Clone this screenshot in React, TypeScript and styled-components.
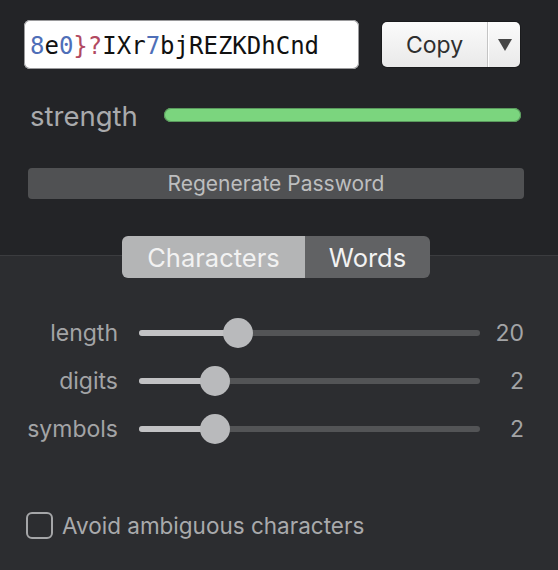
import React from "react";
import styled, { createGlobalStyle } from "styled-components";

const Global = createGlobalStyle`
  html, body { margin: 0; padding: 0; background: #2c2d30; }
  body { font-family: Inter, "Noto Sans", sans-serif; -webkit-font-smoothing: antialiased; }
`;

const Page = styled.div`
  width: 558px;
  height: 570px;
  display: flex;
  flex-direction: column;
  overflow: hidden;
`;

const Top = styled.div`
  background: #232427;
  height: 255px;
  border-bottom: 1px solid #3b3c3f;
  box-sizing: content-box;
  display: flex;
  flex-direction: column;
`;

const PasswordRow = styled.div`
  display: flex;
  align-items: center;
  padding: 20px 38px 0 24px;
  gap: 23px;
`;

const PasswordField = styled.div`
  width: 335px;
  height: 49px;
  box-sizing: border-box;
  background: #ffffff;
  border-radius: 6px;
  box-shadow: 0 0 0 1px #9a9a9c inset;
  display: flex;
  align-items: center;
  padding: 2px 0 0 6px;
  font-family: "DejaVu Sans Mono", "Liberation Mono", monospace;
  font-size: 24px;
  color: #111;
`;

const Ch = styled.span<{ $kind: "digit" | "symbol" | "plain" }>`
  color: ${(p) => (p.$kind === "digit" ? "#4f6fb8" : p.$kind === "symbol" ? "#b24a61" : "#111")};
`;

const CopyGroup = styled.div`
  width: 138px;
  height: 45px;
  display: flex;
  border-radius: 5px;
  background: linear-gradient(#fbfbfb, #e9e9e9);
  box-shadow: 0 0 0 1px rgba(0,0,0,0.25);
  overflow: hidden;
`;

const CopyButton = styled.div`
  width: 105px;
  display: flex;
  align-items: center;
  justify-content: center;
  font-size: 23px;
  color: #2f2f2f;
  border-right: 1px solid #c4c4c4;
  box-shadow: 1px 0 0 #ffffff;
`;

const ArrowButton = styled.div`
  flex: 1;
  display: flex;
  align-items: center;
  justify-content: center;
  padding-left: 2px;
`;

const StrengthRow = styled.div`
  display: flex;
  align-items: center;
  padding: 31px 37px 0 30px;
  gap: 26px;
`;

const StrengthLabel = styled.div`
  font-size: 27.5px;
  color: #a9aaac;
  width: 108px;
  line-height: 32px;
`;

const StrengthBar = styled.div`
  flex: 1;
  height: 14px;
  border-radius: 7px;
  background: #7bd57e;
  box-shadow: 0 0 0 1px #5a9a5d inset;
  margin-top: -3px;
`;

const RegenButton = styled.div`
  margin: 36px 34px 0 28px;
  height: 31px;
  border-radius: 4px;
  background: #505153;
  display: flex;
  align-items: center;
  justify-content: center;
  font-size: 21px;
  color: #bdbebf;
`;

const Bottom = styled.div`
  flex: 1;
  background: #2c2d30;
  display: flex;
  flex-direction: column;
`;

const Tabs = styled.div`
  margin: -20px 0 0 122px;
  width: 308px;
  height: 42px;
  display: flex;
  border-radius: 6px;
  overflow: hidden;
`;

const Tab = styled.div<{ $active?: boolean; $w: number }>`
  width: ${(p) => p.$w}px;
  display: flex;
  align-items: center;
  justify-content: center;
  font-size: 25.5px;
  color: #f2f2f2;
  background: ${(p) => (p.$active ? "#b4b5b6" : "#616264")};
`;

const Sliders = styled.div`
  display: grid;
  grid-template-columns: 118px 362px 44px;
  grid-auto-rows: 48px;
  margin-top: 31px;
  align-items: center;
`;

const SliderLabel = styled.div`
  text-align: right;
  font-size: 23px;
  color: #a3a4a6;
`;

const Track = styled.div`
  position: relative;
  height: 6px;
  border-radius: 3px;
  background: #535456;
  margin-left: 21px;
`;

const TrackFill = styled.div`
  height: 100%;
  border-radius: 3px;
  background: #c2c2c4;
`;

const Thumb = styled.div`
  position: absolute;
  top: 50%;
  width: 30px;
  height: 30px;
  margin: -15px 0 0 -15px;
  border-radius: 50%;
  background: #b9babc;
`;

const SliderValue = styled.div`
  text-align: right;
  font-size: 23px;
  color: #a3a4a6;
`;

const CheckRow = styled.label`
  display: flex;
  align-items: center;
  gap: 9px;
  margin: 59px 0 0 26px;
`;

const Box = styled.span`
  width: 27px;
  height: 27px;
  box-sizing: border-box;
  border: 2px solid #a5a6a8;
  border-radius: 6px;
`;

const CheckText = styled.span`
  font-size: 22.5px;
  color: #a9aaac;
`;

const password = "8e0}?IXr7bjREZKDhCnd";

const sliders = [
  { label: "length", pos: 99, value: "20" },
  { label: "digits", pos: 76, value: "2" },
  { label: "symbols", pos: 76, value: "2" },
];

export default function App() {
  return (
    <Page>
      <Global />
      <Top>
        <PasswordRow>
          <PasswordField>
            {password.split("").map((c, i) => (
              <Ch key={i} $kind={/[0-9]/.test(c) ? "digit" : /[A-Za-z]/.test(c) ? "plain" : "symbol"}>
                {c}
              </Ch>
            ))}
          </PasswordField>
          <CopyGroup>
            <CopyButton>Copy</CopyButton>
            <ArrowButton>
              <svg width="14" height="12" viewBox="0 0 14 12">
                <path d="M0 0 H14 L7 12 Z" fill="#474747" />
              </svg>
            </ArrowButton>
          </CopyGroup>
        </PasswordRow>
        <StrengthRow>
          <StrengthLabel>strength</StrengthLabel>
          <StrengthBar />
        </StrengthRow>
        <RegenButton>Regenerate Password</RegenButton>
      </Top>
      <Bottom>
        <Tabs>
          <Tab $active $w={183}>Characters</Tab>
          <Tab $w={125}>Words</Tab>
        </Tabs>
        <Sliders>
          {sliders.map((s) => (
            <React.Fragment key={s.label}>
              <SliderLabel>{s.label}</SliderLabel>
              <Track>
                <TrackFill style={{ width: s.pos }} />
                <Thumb style={{ left: s.pos }} />
              </Track>
              <SliderValue>{s.value}</SliderValue>
            </React.Fragment>
          ))}
        </Sliders>
        <CheckRow>
          <Box />
          <CheckText>Avoid ambiguous characters</CheckText>
        </CheckRow>
      </Bottom>
    </Page>
  );
}
